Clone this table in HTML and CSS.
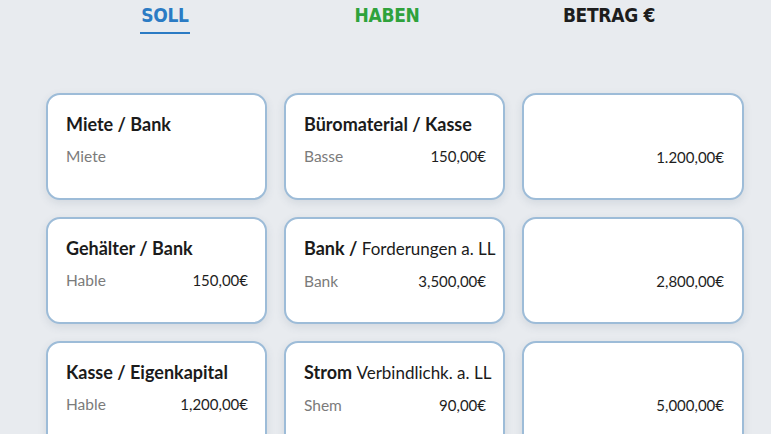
FILE: index.html
```html
<!DOCTYPE html>
<html lang="de">
<head>
<meta charset="utf-8">
<link rel="stylesheet" href="styles.css">
</head>
<body>
<header class="tabs">
  <div class="tab tab-soll">SOLL</div>
  <div class="tab tab-haben">HABEN</div>
  <div class="tab tab-betrag">BETRAG €</div>
</header>
<main class="grid">
  <div class="card">
    <div class="title">Miete / Bank</div>
    <div class="row"><span class="sub">Miete</span></div>
  </div>
  <div class="card">
    <div class="title">Büromaterial / Kasse</div>
    <div class="row"><span class="sub">Basse</span><span class="amt">150,00€</span></div>
  </div>
  <div class="card card-amount">
    <div class="row"><span class="amt">1.200,00€</span></div>
  </div>

  <div class="card">
    <div class="title">Gehälter / Bank</div>
    <div class="row"><span class="sub">Hable</span><span class="amt">150,00€</span></div>
  </div>
  <div class="card">
    <div class="title">Bank / <span class="light">Forderungen a. LL</span></div>
    <div class="row"><span class="sub">Bank</span><span class="amt">3,500,00€</span></div>
  </div>
  <div class="card card-amount">
    <div class="row"><span class="amt">2,800,00€</span></div>
  </div>

  <div class="card">
    <div class="title">Kasse / Eigenkapital</div>
    <div class="row"><span class="sub">Hable</span><span class="amt">1,200,00€</span></div>
  </div>
  <div class="card">
    <div class="title">Strom <span class="light">Verbindlichk. a. LL</span></div>
    <div class="row"><span class="sub">Shem</span><span class="amt">90,00€</span></div>
  </div>
  <div class="card card-amount">
    <div class="row"><span class="amt">5,000,00€</span></div>
  </div>
</main>
</body>
</html>
```
FILE: styles.css
```css
html, body {
  margin: 0;
  padding: 0;
}
body {
  background: #e8ebef;
  font-family: Lato, "Noto Sans", sans-serif;
  color: #1c1c1c;
  width: 771px;
  height: 434px;
  overflow: hidden;
}
.tabs {
  display: grid;
  grid-template-columns: 1fr 1fr 1fr;
  padding: 3px 51px 0 54px;
  height: 57px;
}
.tab {
  justify-self: center;
  font-family: "DejaVu Sans Condensed", "DejaVu Sans", sans-serif;
  font-weight: bold;
  font-size: 19px;
  line-height: 24px;
  letter-spacing: -0.3px;
  height: 24px;
}
.tab-soll {
  color: #2b7bc4;
  padding-bottom: 5px;
  border-bottom: 2.5px solid #2b7bc4;
  padding-left: 1px;
  padding-right: 1px;
}
.tab-haben { color: #2fa23c; }
.tab-betrag { color: #1d1d1d; }

.grid {
  display: grid;
  grid-template-columns: 221px 221px 222px;
  grid-auto-rows: 107px;
  gap: 17px;
  padding: 33px 0 0 46px;
}
.card {
  background: #ffffff;
  border: 2px solid #9dbcd8;
  border-radius: 14px;
  box-shadow: 0 3px 8px rgba(60, 80, 110, 0.12);
  box-sizing: border-box;
  padding: 17px 17px 0 18px;
}
.title {
  font-size: 18px;
  font-weight: bold;
  line-height: 24px;
  color: #1b1b1b;
  white-space: nowrap;
}
.light {
  font-weight: 400;
  font-size: 17px;
}
.row {
  display: flex;
  justify-content: space-between;
  align-items: baseline;
  margin-top: 10px;
  line-height: 20px;
}
.sub {
  font-size: 15.5px;
  color: #7b7b7b;
}
.amt {
  font-size: 15px;
  color: #1e1e1e;
  margin-left: auto;
}
.card-amount .row {
  margin-top: 35px;
  padding-right: 1px;
}
```
